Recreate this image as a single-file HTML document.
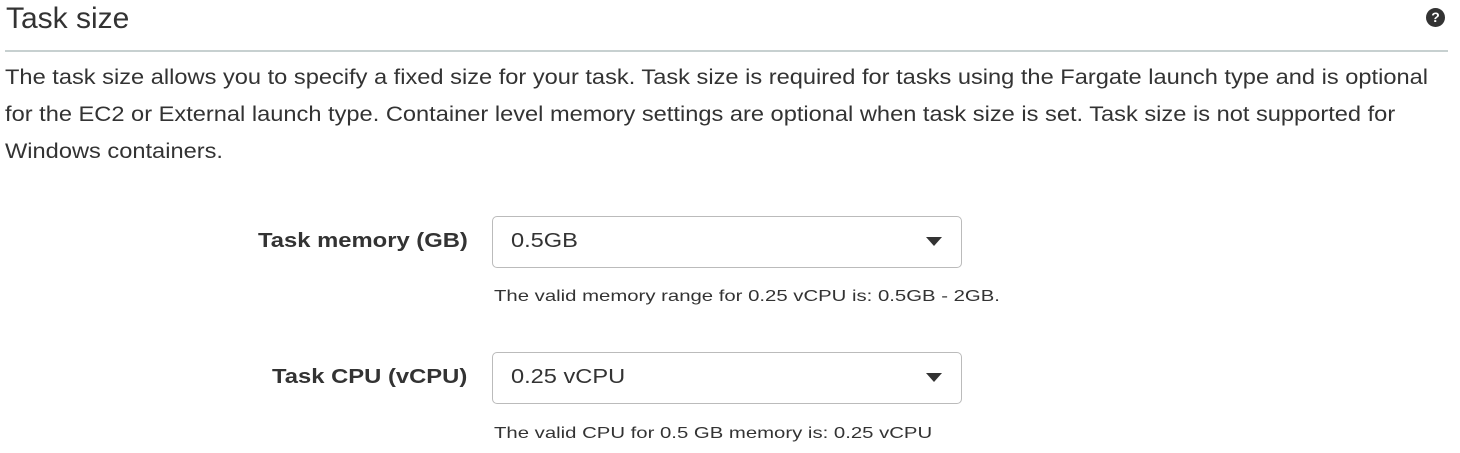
<!DOCTYPE html>
<html><head><style>
body{margin:0;width:1460px;height:453px;background:#fff;font-family:"Liberation Sans",sans-serif;color:#333;position:relative;overflow:hidden}
h1{position:absolute;left:6px;top:2px;margin:0;font-weight:normal;font-size:30px;color:#333}
.hr{position:absolute;left:5px;top:50px;width:1443px;height:2px;background:#c7d0d0}
.pl{position:absolute;left:5px;font-size:21px;line-height:24px;color:#333;white-space:nowrap;transform:scaleX(1.125);transform-origin:0 0}
.lbl{position:absolute;left:258px;font-weight:bold;font-size:20px;color:#333;white-space:nowrap;transform:scaleX(1.19);transform-origin:0 0}
.sel{position:absolute;left:492px;width:468px;height:50px;border:1px solid #bbb;border-radius:5px}
.sel span{position:absolute;left:18px;top:13px;font-size:20px;white-space:nowrap;transform:scaleX(1.18);transform-origin:0 0}
.sel i{position:absolute;left:433px;top:20px;width:0;height:0;border-left:8px solid transparent;border-right:8px solid transparent;border-top:9px solid #333}
.hint{position:absolute;left:494px;font-size:16px;color:#333;white-space:nowrap;transform:scaleX(1.27);transform-origin:0 0}
.q{position:absolute;left:1426px;top:8px;width:19px;height:19px;border-radius:50%;background:#333;color:#fff;font-weight:bold;font-size:14px;text-align:center;line-height:19px}
</style></head><body>
<h1>Task size</h1>
<div class="q">?</div>
<div class="hr"></div>
<div class="pl" style="top:66px">The task size allows you to specify a fixed size for your task. Task size is required for tasks using the Fargate launch type and is optional</div>
<div class="pl" style="top:103px">for the EC2 or External launch type. Container level memory settings are optional when task size is set. Task size is not supported for</div>
<div class="pl" style="top:140px">Windows containers.</div>
<div class="lbl" style="top:230px">Task memory (GB)</div>
<div class="sel" style="top:216px"><span>0.5GB</span><i></i></div>
<div class="hint" style="top:288px">The valid memory range for 0.25 vCPU is: 0.5GB - 2GB.</div>
<div class="lbl" style="top:366px;left:272px">Task CPU (vCPU)</div>
<div class="sel" style="top:352px"><span>0.25 vCPU</span><i></i></div>
<div class="hint" style="top:425px">The valid CPU for 0.5 GB memory is: 0.25 vCPU</div>
</body></html>
